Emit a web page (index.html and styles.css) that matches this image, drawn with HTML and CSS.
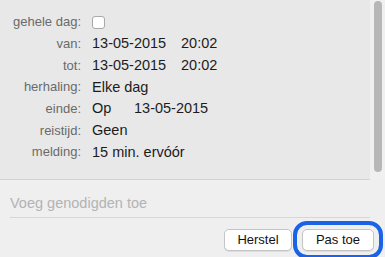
FILE: index.html
```html
<!DOCTYPE html>
<html lang="nl">
<head>
    <meta charset="UTF-8">
    <title>Gebeurtenis</title>
    <link rel="stylesheet" href="styles.css">
</head>
<body>
    <div class="scroll">
        <div class="details">
            <div class="row">
                <span class="label">gehele dag:</span>
                <span class="value"><span class="checkbox"></span></span>
            </div>
            <div class="row">
                <span class="label">van:</span>
                <span class="value"><span class="date">13-05-2015</span>20:02</span>
            </div>
            <div class="row">
                <span class="label">tot:</span>
                <span class="value"><span class="date">13-05-2015</span>20:02</span>
            </div>
            <div class="row">
                <span class="label">herhaling:</span>
                <span class="value">Elke dag</span>
            </div>
            <div class="row">
                <span class="label">einde:</span>
                <span class="value"><span class="op">Op</span>13-05-2015</span>
            </div>
            <div class="row">
                <span class="label">reistijd:</span>
                <span class="value">Geen</span>
            </div>
            <div class="row">
                <span class="label">melding:</span>
                <span class="value">15 min. ervóór</span>
            </div>
        </div>
        <div class="scrollbar">
            <div class="thumb"></div>
        </div>
    </div>

    <div class="invite">
        <div class="invite-field">Voeg genodigden toe</div>
    </div>

    <div class="actions">
        <button class="btn">Herstel</button>
        <div class="focus-ring">
            <button class="btn btn-default">Pas toe</button>
        </div>
    </div>
</body>
</html>
```

FILE: styles.css
```css
body {
    margin: 0;
    padding: 0;
    width: 385px;
    height: 257px;
    overflow: hidden;
    background-color: #efefef;
    font-family: 'Liberation Sans', Arial, sans-serif;
}

.scroll {
    display: flex;
    height: 180px;
}

.details {
    flex: 1;
    background-color: #e8e8e8;
    border-bottom: 1px solid #d2d2d2;
    padding-top: 11px;
    box-sizing: border-box;
}

.row {
    display: grid;
    grid-template-columns: 81px 1fr;
    column-gap: 11px;
    align-items: center;
    height: 21.67px;
}

.label {
    text-align: right;
    font-size: 13px;
    color: #6a6a6a;
}

.value {
    font-size: 14.5px;
    color: #1c1c1c;
    display: flex;
    align-items: center;
}

.date {
    display: inline-block;
    width: 89px;
}

.op {
    display: inline-block;
    width: 42px;
}

.checkbox {
    width: 11px;
    height: 11px;
    background: #fff;
    border: 1px solid #a9a9a9;
    border-radius: 3px;
    margin-top: 1px;
}

/* Scrollbar */
.scrollbar {
    width: 15px;
    background-color: #f0f0f0;
}

.thumb {
    width: 8px;
    height: 171px;
    margin: 1px 0 0 4px;
    background-color: #b7b7b7;
    border-radius: 4px;
}

/* Invitees */
.invite {
    padding: 15px 15px 0 10px;
}

.invite-field {
    font-size: 14.5px;
    line-height: 17px;
    color: #b3b3b3;
    padding-bottom: 5px;
    border-bottom: 1px solid #d6d6d6;
}

/* Buttons */
.actions {
    display: flex;
    justify-content: flex-end;
    align-items: flex-start;
    gap: 0;
    padding: 3px 2px 0 0;
}

.btn {
    box-sizing: border-box;
    font-family: 'Liberation Sans', Arial, sans-serif;
    font-size: 13px;
    line-height: 20px;
    color: #111;
    background: #fff;
    border: 1px solid #c4c4c4;
    border-radius: 5px;
    height: 22px;
    width: 68px;
    padding: 0;
    margin: 8px 1px 0 0;
    box-shadow: 0 1px 0 rgba(0, 0, 0, 0.08);
}

.focus-ring {
    display: flex;
    padding: 4px 5px;
    border: 4px solid #1a62e6;
    border-radius: 14px;
}

.btn-default {
    width: 72px;
    margin: 0;
}
```
